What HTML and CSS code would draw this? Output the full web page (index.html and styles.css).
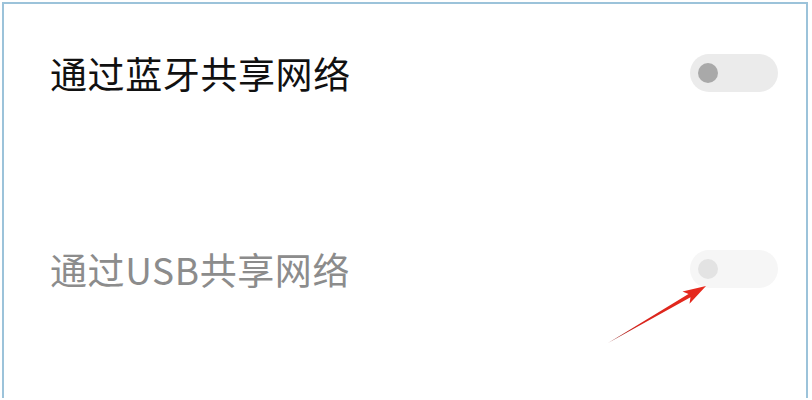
FILE: index.html
```html
<!DOCTYPE html>
<html lang="zh-CN">
<head>
    <meta charset="UTF-8">
    <meta name="viewport" content="width=device-width, initial-scale=1.0">
    <title>网络共享</title>
    <link rel="stylesheet" href="styles.css">
</head>
<body>
    <div class="panel">
        <div class="setting-row">
            <span class="setting-label">通过蓝牙共享网络</span>
            <span class="switch"><span class="knob"></span></span>
        </div>
        <div class="setting-row disabled">
            <span class="setting-label">通过USB共享网络</span>
            <span class="switch"><span class="knob"></span></span>
        </div>
    </div>

    <!-- red pointer drawn on top of the USB switch -->
    <svg class="pointer" width="812" height="400" viewBox="0 0 812 400">
        <defs>
            <linearGradient id="arrowFill" x1="608" y1="343" x2="706" y2="286" gradientUnits="userSpaceOnUse">
                <stop offset="0" stop-color="#8a2a2a"/>
                <stop offset="0.3" stop-color="#d8241c"/>
                <stop offset="1" stop-color="#e82a1e"/>
            </linearGradient>
        </defs>
        <polygon fill="url(#arrowFill)" points="608,343 690.5,297.3 689.5,303.7 706,286 682.5,291.5 688.5,293.9"/>
    </svg>
</body>
</html>
```

FILE: styles.css
```css
body {
    margin: 0;
    background: #ffffff;
    font-family: "Noto Sans CJK SC", "Noto Sans", sans-serif;
}
.panel {
    margin: 2px 4px 0 2px;
    height: 396px;
    box-sizing: border-box;
    border: 2px solid #9cc3da;
    border-bottom: none;
    padding: 0 28px 0 46px;
}
.setting-row {
    display: flex;
    justify-content: space-between;
    align-items: center;
    height: 138px;
}
.setting-row.disabled {
    margin-top: 58px;
}
.setting-label {
    font-size: 37px;
    letter-spacing: 0.6px;
    color: #111111;
}
.disabled .setting-label {
    color: #8c8c8c;
}
.switch {
    display: flex;
    align-items: center;
    width: 88px;
    height: 38px;
    border-radius: 19px;
    background: #ebebeb;
    padding-left: 8px;
    box-sizing: border-box;
}
.knob {
    width: 20px;
    height: 20px;
    border-radius: 50%;
    background: #a9a9a9;
}
.disabled .switch {
    background: #f6f6f6;
}
.disabled .knob {
    background: #e3e3e3;
}
.pointer {
    position: absolute;
    left: 0;
    top: 0;
    pointer-events: none;
}
```
